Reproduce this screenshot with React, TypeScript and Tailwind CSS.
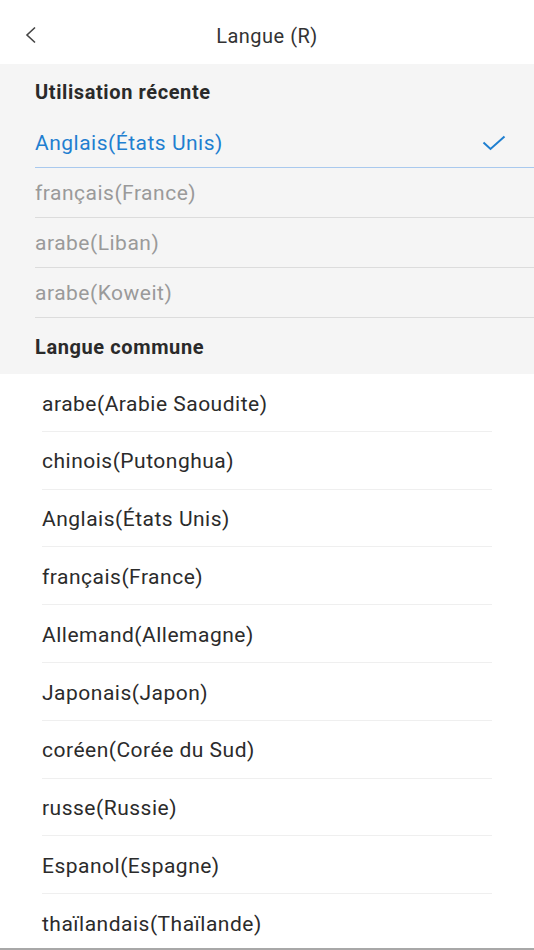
import React from "react";

const recent = ["français(France)", "arabe(Liban)", "arabe(Koweit)"];
const common = [
  "arabe(Arabie Saoudite)",
  "chinois(Putonghua)",
  "Anglais(États Unis)",
  "français(France)",
  "Allemand(Allemagne)",
  "Japonais(Japon)",
  "coréen(Corée du Sud)",
  "russe(Russie)",
  "Espanol(Espagne)",
  "thaïlandais(Thaïlande)",
];

export default function App() {
  return (
    <div
      className="w-[534px] h-[950px] flex flex-col bg-white overflow-hidden"
      style={{ fontFamily: "Roboto, 'Noto Sans', sans-serif" }}
    >
      <div className="h-[64px] shrink-0 relative flex items-center justify-center">
        <svg
          className="absolute left-[24px] top-[26px]"
          width="14"
          height="18"
          viewBox="0 0 14 18"
          fill="none"
          stroke="#444"
          strokeWidth="1.6"
        >
          <path d="M11 1.5 L3 9 L11 16.5" />
        </svg>
        <span className="text-[20px] tracking-[0.5px] text-[#333] mt-[7px]">Langue (R)</span>
      </div>

      <div className="bg-[#f5f5f5] shrink-0">
        <div className="h-[54px] flex items-center pl-[35px] text-[20px] tracking-[0.6px] font-bold text-[#2a2a2a] pt-[2px]">
          Utilisation récente
        </div>
        <div className="ml-[35px]">
          <div className="h-[50px] flex items-center justify-between border-b border-[#a9c9ee] text-[21px] tracking-[0.5px] text-[#1f7fd0] pr-[28px]">
            <span className="pt-[3px]">Anglais(États Unis)</span>
            <svg width="24" height="16" viewBox="0 0 24 16" fill="none" stroke="#1f7fd0" strokeWidth="2">
              <path d="M1.5 7.5 L8.5 14 L22.5 1.5" />
            </svg>
          </div>
          {recent.map((r) => (
            <div
              key={r}
              className="h-[50px] flex items-center border-b border-[#dcdcdc] text-[21px] tracking-[0.5px] text-[#9a9a9a]"
            >
              <span className="pt-[3px]">{r}</span>
            </div>
          ))}
        </div>
        <div className="h-[56px] flex items-center pl-[35px] text-[20px] tracking-[0.6px] font-bold text-[#2a2a2a] pt-[2px]">
          Langue commune
        </div>
      </div>

      <div className="flex-1 overflow-hidden">
        {common.map((c, i) => (
          <div
            key={c + i}
            className={
              "ml-[42px] mr-[42px] h-[57.8px] flex items-center text-[21px] tracking-[0.5px] text-[#2b2b2b] " +
              (i < common.length - 1 ? "border-b border-[#efefef]" : "")
            }
          >
            <span className="pt-[4px]">{c}</span>
          </div>
        ))}
      </div>
      <div className="h-[2px] shrink-0 bg-[#a8a8a8]" />
    </div>
  );
}
